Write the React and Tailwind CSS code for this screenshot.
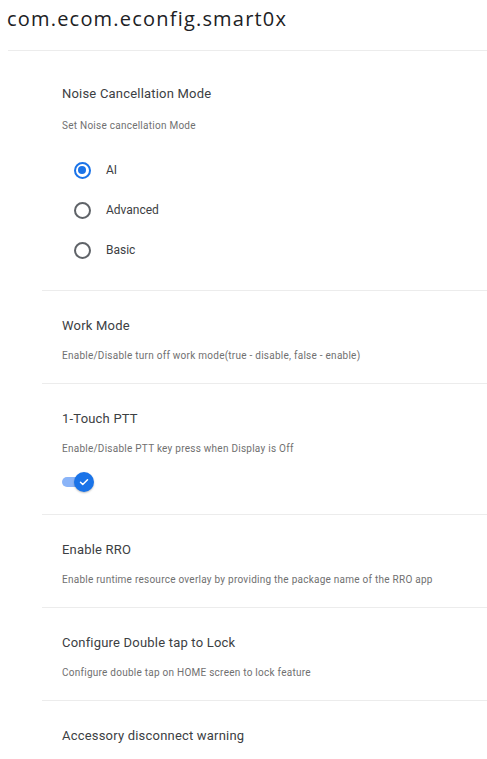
import React from "react";

function Radio({ checked, label }) {
  return (
    <div className="flex h-10 items-center">
      <div className="flex w-10 justify-center">
        {checked ? (
          <div className="flex h-[17px] w-[17px] items-center justify-center rounded-full border-2 border-[#1a73e8]">
            <div className="h-[8px] w-[8px] rounded-full bg-[#1a73e8]" />
          </div>
        ) : (
          <div className="h-[17px] w-[17px] rounded-full border-2 border-[#5f6368]" />
        )}
      </div>
      <span className="ml-[4px] text-[12px] text-[#3c4043]">{label}</span>
    </div>
  );
}

function Section({ title, desc, children, pb = "pb-5", dm = "mt-[13px]" }) {
  return (
    <div className={`border-b border-[#ececec] pl-5 pt-[25px] ${pb}`}>
      <div className="text-[13px] leading-5 tracking-[0.2px] text-[#3c4043]">{title}</div>
      {desc && (
        <div className={`${dm} text-[10px] leading-[14px] tracking-[0.25px] text-[#707070]`}>
          {desc}
        </div>
      )}
      {children}
    </div>
  );
}

export default function App() {
  return (
    <div
      className="min-h-[759px] w-[487px] bg-white"
      style={{ fontFamily: "Roboto, 'Liberation Sans', sans-serif" }}
    >
      <div className="ml-2 h-[51px] border-b border-[#ececec]">
        <div
          className="-ml-[1px] pt-[5px] text-[20px] leading-7 tracking-[1.2px] text-[#202124]"
          style={{ fontFamily: "'Open Sans', 'Liberation Sans', sans-serif" }}
        >
          com.ecom.econfig.smart0x
        </div>
      </div>
      <div className="ml-[42px] pt-2">
        <Section
          title="Noise Cancellation Mode"
          desc="Set Noise cancellation Mode"
          pb="pb-5"
          dm="mt-[15px]"
        >
          <div className="mt-[17px] flex flex-col">
            <Radio checked label="AI" />
            <Radio label="Advanced" />
            <Radio label="Basic" />
          </div>
        </Section>
        <Section
          title="Work Mode"
          desc="Enable/Disable turn off work mode(true - disable, false - enable)"
        />
        <Section
          title="1-Touch PTT"
          desc="Enable/Disable PTT key press when Display is Off"
          pb="pb-[22px]"
        >
          <div className="mt-4 flex h-5 items-center">
            <div className="relative h-[20px] w-[32px]">
              <div className="absolute left-0 top-[5px] h-[10px] w-[28px] rounded-full bg-[#8ab4f8]" />
              <div className="absolute left-[12px] top-0 flex h-[20px] w-[20px] items-center justify-center rounded-full bg-[#1a73e8] shadow-[0_1px_2px_rgba(0,0,0,0.25)]">
                <svg width="12" height="12" viewBox="0 0 24 24" fill="none">
                  <path d="M5 12.5l4.5 4.5L19 7.5" stroke="white" strokeWidth="3" strokeLinecap="round" strokeLinejoin="round" />
                </svg>
              </div>
            </div>
          </div>
        </Section>
        <Section
          title="Enable RRO"
          desc="Enable runtime resource overlay by providing the package name of the RRO app"
        />
        <Section
          title="Configure Double tap to Lock"
          desc="Configure double tap on HOME screen to lock feature"
        />
        <Section title="Accessory disconnect warning" pb="pb-[13px]" />
      </div>
    </div>
  );
}
